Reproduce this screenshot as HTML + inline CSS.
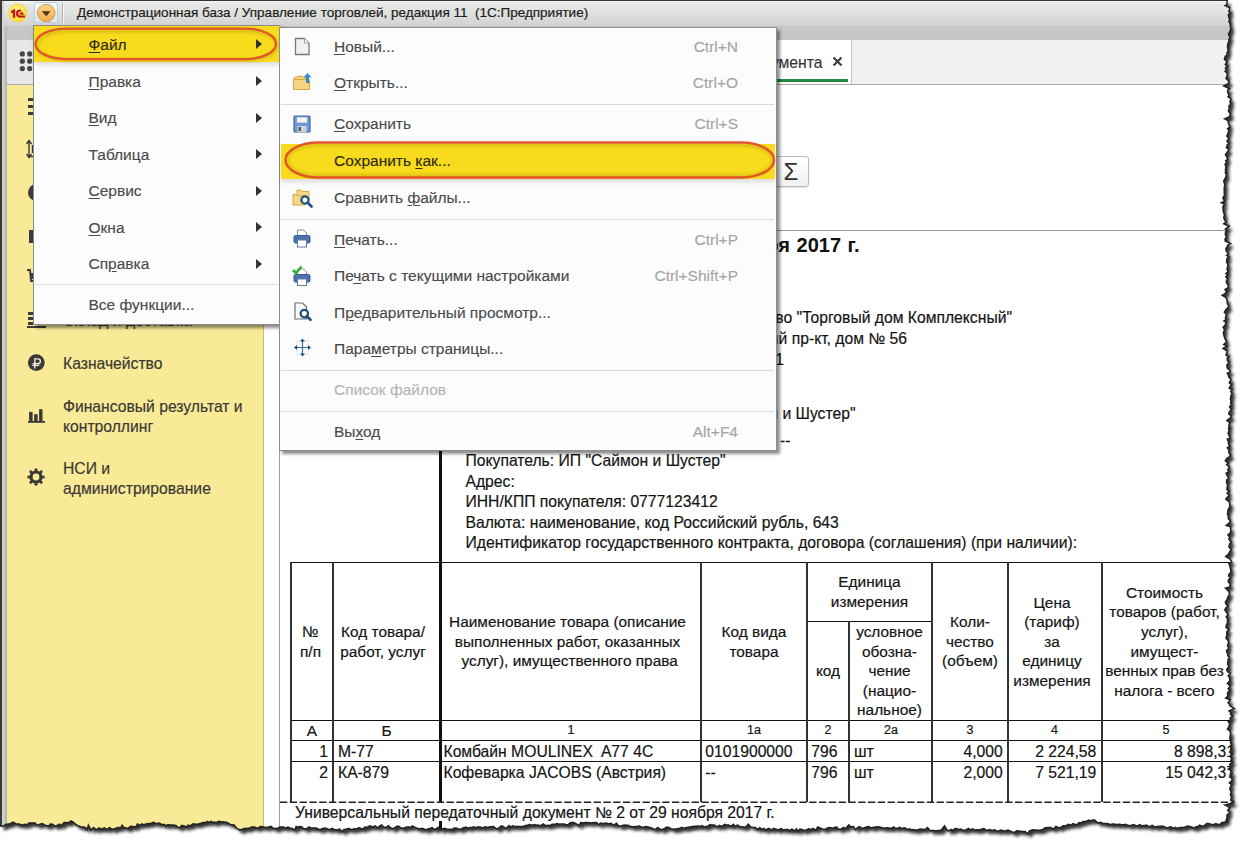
<!DOCTYPE html>
<html><head><meta charset="utf-8">
<style>
html,body{margin:0;padding:0;width:1246px;height:844px;overflow:hidden;background:#fff;}
body{font-family:"Liberation Sans",sans-serif;position:relative;}
.a{position:absolute;}
.nw{white-space:nowrap;}
#shadow{position:absolute;left:0;top:0;width:1246px;height:844px;z-index:0;}
#win{position:absolute;left:0;top:0;width:1246px;height:844px;z-index:1;overflow:hidden;background:#fff;
  clip-path:path('M0.0 0.0 L1227.4 0.0 L1226.9 2.5 L1227.0 4.4 L1225.1 5.7 L1229.9 7.8 L1229.4 9.4 L1228.9 11.8 L1230.5 13.1 L1228.3 14.5 L1228.8 17.4 L1229.7 19.8 L1228.8 21.2 L1230.2 23.7 L1230.3 26.1 L1230.7 28.9 L1229.8 31.2 L1228.6 33.9 L1228.9 35.3 L1230.2 36.8 L1228.8 39.6 L1228.9 41.4 L1227.8 43.8 L1227.4 46.8 L1227.9 48.2 L1227.9 51.4 L1226.8 53.3 L1227.3 54.9 L1225.3 56.3 L1224.4 59.3 L1227.0 61.6 L1225.3 64.5 L1227.5 66.4 L1225.4 67.9 L1226.5 69.6 L1225.1 71.3 L1227.1 73.2 L1227.2 75.8 L1226.0 78.4 L1228.9 81.1 L1228.7 83.1 L1226.7 84.4 L1223.7 86.0 L1227.1 87.5 L1229.7 88.7 L1227.8 90.2 L1227.6 92.1 L1229.0 95.3 L1228.0 96.7 L1230.5 98.4 L1231.0 99.7 L1229.9 101.2 L1230.6 104.3 L1228.9 106.1 L1229.4 108.8 L1228.3 110.7 L1230.2 113.8 L1229.7 116.7 L1224.6 118.9 L1228.0 120.7 L1228.5 123.8 L1230.0 126.9 L1227.6 128.6 L1228.8 130.2 L1228.2 133.1 L1226.8 135.9 L1228.9 138.9 L1226.9 141.1 L1228.7 142.9 L1227.3 144.9 L1226.4 147.6 L1228.6 149.1 L1228.3 150.6 L1226.5 153.1 L1225.4 154.5 L1226.8 157.0 L1227.8 159.1 L1225.7 160.7 L1226.6 162.4 L1225.0 164.4 L1225.9 166.3 L1225.5 169.4 L1225.7 171.6 L1225.3 172.8 L1226.4 174.0 L1226.0 176.2 L1225.2 178.0 L1223.7 180.8 L1224.1 182.5 L1224.8 184.7 L1224.2 187.7 L1224.3 189.9 L1224.2 192.0 L1224.5 195.1 L1222.9 198.2 L1224.7 201.3 L1221.4 202.7 L1224.3 204.1 L1222.9 207.1 L1223.1 209.6 L1223.6 212.7 L1224.6 214.7 L1223.7 217.6 L1224.5 219.8 L1226.3 221.6 L1223.7 223.7 L1229.4 226.2 L1225.3 229.0 L1226.7 230.2 L1225.6 231.7 L1225.3 234.5 L1226.5 237.6 L1225.0 238.9 L1225.2 241.0 L1230.6 243.5 L1228.0 244.8 L1227.2 246.7 L1225.9 248.4 L1226.0 250.1 L1226.4 251.4 L1228.3 253.2 L1226.6 255.4 L1228.8 256.6 L1226.9 258.9 L1226.6 262.0 L1227.8 264.1 L1227.7 266.1 L1227.0 269.2 L1227.9 271.8 L1225.9 273.7 L1228.0 275.1 L1225.9 276.6 L1227.6 279.5 L1226.3 281.2 L1226.7 282.7 L1228.3 285.9 L1228.2 287.6 L1225.0 289.5 L1226.5 291.6 L1224.8 293.8 L1222.1 295.2 L1225.3 297.0 L1226.9 299.3 L1227.2 301.9 L1227.4 303.8 L1228.9 306.4 L1226.0 309.4 L1224.3 312.2 L1226.4 314.4 L1225.5 317.3 L1225.7 319.8 L1223.9 321.1 L1226.0 322.5 L1225.2 325.0 L1223.1 327.1 L1224.6 329.8 L1223.4 332.4 L1223.6 334.1 L1224.3 336.7 L1225.6 339.9 L1226.4 342.0 L1223.7 344.5 L1227.0 346.2 L1223.0 348.5 L1227.3 351.1 L1226.9 352.8 L1225.9 355.0 L1228.8 356.6 L1227.2 357.8 L1227.5 360.9 L1229.3 362.6 L1226.9 364.9 L1227.2 368.0 L1229.9 370.2 L1230.1 371.9 L1227.3 373.2 L1228.5 375.3 L1228.7 377.1 L1230.2 378.4 L1230.9 379.8 L1229.2 382.8 L1231.7 384.8 L1230.0 386.7 L1229.1 388.0 L1232.0 389.8 L1230.6 391.5 L1231.9 393.4 L1230.8 396.3 L1230.4 399.4 L1231.0 400.7 L1230.6 403.4 L1231.4 404.7 L1229.5 406.8 L1231.4 409.5 L1229.2 412.0 L1228.7 414.0 L1231.0 415.6 L1230.9 417.2 L1228.4 419.3 L1226.9 420.7 L1229.6 422.4 L1229.0 425.1 L1228.8 427.4 L1228.5 428.7 L1229.2 430.2 L1228.1 433.1 L1228.7 434.8 L1230.0 437.9 L1227.3 439.1 L1228.6 442.1 L1228.3 443.3 L1229.7 446.2 L1227.3 447.9 L1229.0 450.1 L1228.8 452.8 L1230.7 454.9 L1229.6 456.5 L1227.0 458.3 L1225.3 460.8 L1228.3 463.1 L1226.7 464.7 L1229.3 466.8 L1227.7 469.8 L1229.2 471.5 L1226.1 473.3 L1227.3 475.9 L1228.8 478.4 L1226.9 479.7 L1226.5 482.2 L1227.6 484.9 L1227.1 488.0 L1226.9 489.7 L1229.3 491.5 L1227.0 493.1 L1229.4 495.6 L1227.1 497.6 L1225.8 499.1 L1229.5 502.1 L1229.7 505.3 L1229.8 506.8 L1229.0 508.1 L1228.0 510.0 L1227.9 511.3 L1227.5 514.4 L1228.3 516.0 L1228.4 518.8 L1230.3 520.8 L1229.6 522.7 L1226.2 525.5 L1230.5 526.8 L1230.5 529.5 L1230.8 531.3 L1230.1 533.0 L1227.9 534.8 L1230.0 537.8 L1228.8 539.0 L1231.2 542.2 L1229.6 543.9 L1228.9 546.9 L1231.0 549.6 L1229.5 552.0 L1228.7 553.9 L1225.7 556.6 L1229.8 558.9 L1231.8 561.9 L1228.9 563.3 L1229.8 565.9 L1230.3 567.9 L1230.8 570.6 L1230.7 572.1 L1229.0 574.4 L1228.5 576.0 L1230.5 577.5 L1228.8 579.4 L1228.1 581.6 L1230.2 584.1 L1229.7 586.9 L1225.4 588.2 L1228.6 591.3 L1229.4 593.3 L1229.0 595.0 L1228.3 596.4 L1227.4 598.1 L1227.0 599.7 L1225.3 602.2 L1226.4 604.7 L1228.3 606.3 L1225.9 607.7 L1224.8 610.0 L1226.6 612.5 L1228.2 614.4 L1226.2 616.7 L1228.0 619.6 L1227.2 621.2 L1227.8 622.4 L1226.3 625.3 L1226.0 627.4 L1229.0 629.9 L1226.8 631.8 L1226.9 633.6 L1226.8 635.0 L1226.0 638.1 L1228.6 641.2 L1228.5 642.5 L1227.6 645.5 L1228.2 647.1 L1228.4 649.1 L1226.5 650.6 L1227.1 652.9 L1228.2 654.6 L1227.7 655.8 L1229.4 657.1 L1228.0 659.4 L1228.0 661.5 L1227.6 664.0 L1228.2 665.2 L1228.7 666.9 L1226.9 669.0 L1226.8 670.4 L1227.8 671.8 L1230.4 673.1 L1228.2 675.8 L1229.6 677.8 L1229.9 680.7 L1227.4 683.5 L1229.9 685.7 L1229.4 687.3 L1228.1 688.6 L1229.9 690.1 L1227.5 692.9 L1227.8 696.0 L1225.7 698.2 L1230.3 699.7 L1228.0 702.7 L1229.2 704.1 L1230.3 706.1 L1234.4 708.4 L1229.0 710.9 L1231.0 712.6 L1230.4 714.5 L1232.9 716.1 L1230.1 717.8 L1230.3 720.2 L1228.3 721.4 L1229.7 723.8 L1228.8 726.8 L1227.4 729.3 L1229.7 730.7 L1230.6 733.1 L1230.3 735.5 L1229.7 738.6 L1231.0 740.0 L1230.4 742.7 L1231.2 744.0 L1231.3 745.9 L1231.7 748.9 L1229.6 752.0 L1232.5 754.0 L1231.4 755.2 L1230.3 756.7 L1231.8 758.9 L1230.8 760.4 L1232.6 761.7 L1229.7 764.4 L1231.1 767.1 L1228.2 769.2 L1230.6 770.4 L1232.2 773.0 L1231.2 774.8 L1231.0 777.5 L1232.4 780.0 L1229.3 783.0 L1231.6 784.7 L1230.2 787.3 L1229.8 789.2 L1231.2 791.7 L1230.4 794.8 L1231.6 797.4 L1230.6 800.1 L1233.8 801.7 L1231.9 803.2 L1224.9 805.1 L1229.8 807.7 L1227.6 810.3 L1229.7 812.3 L1226.9 815.2 L1227.0 818.3 L1226.2 819.7 L1227.8 822.5 L1227.0 820.1 L1224.3 822.5 L1222.2 822.2 L1220.5 824.0 L1218.6 824.8 L1215.7 823.6 L1213.7 824.7 L1211.0 824.3 L1208.1 823.5 L1206.6 823.5 L1203.9 826.1 L1201.7 826.0 L1199.5 825.2 L1197.8 826.9 L1196.1 826.5 L1194.7 828.2 L1192.1 827.2 L1190.2 826.5 L1187.2 826.1 L1186.0 826.6 L1183.0 827.6 L1180.0 827.4 L1177.7 828.5 L1175.3 827.4 L1173.7 828.4 L1171.1 826.7 L1168.3 827.5 L1166.2 828.1 L1164.6 826.6 L1161.7 826.1 L1160.0 826.4 L1158.5 826.3 L1155.3 827.1 L1152.2 825.4 L1149.1 826.9 L1147.0 825.3 L1145.6 825.2 L1144.3 825.6 L1141.7 825.7 L1139.6 824.7 L1137.6 826.0 L1135.5 825.5 L1133.5 824.5 L1130.5 825.6 L1127.6 825.2 L1125.5 824.2 L1124.1 824.4 L1121.5 824.7 L1119.4 824.2 L1117.4 824.6 L1115.9 824.4 L1113.9 823.9 L1112.6 823.9 L1109.8 824.7 L1108.4 823.7 L1105.8 823.4 L1102.9 823.2 L1099.8 822.3 L1097.9 823.1 L1094.7 819.9 L1092.7 819.9 L1090.6 821.0 L1088.9 820.0 L1085.8 821.4 L1083.0 821.6 L1081.6 822.9 L1079.1 822.6 L1077.5 824.2 L1075.0 824.4 L1072.8 823.6 L1071.4 825.2 L1068.5 824.4 L1066.8 825.2 L1065.6 826.1 L1063.9 825.5 L1061.8 826.7 L1059.9 827.8 L1058.6 827.8 L1055.8 826.5 L1053.4 829.2 L1050.8 827.4 L1049.4 827.5 L1047.5 827.6 L1044.7 828.0 L1042.3 829.8 L1039.3 830.2 L1037.7 830.2 L1035.0 829.9 L1032.7 829.8 L1031.2 830.3 L1029.7 830.7 L1027.4 833.9 L1025.3 831.5 L1022.4 831.4 L1019.3 830.9 L1016.8 830.7 L1014.3 832.7 L1011.1 831.4 L1008.1 830.1 L1005.7 830.7 L1003.7 830.9 L1001.0 830.1 L998.9 830.8 L997.2 831.3 L994.9 829.8 L991.8 830.5 L989.9 829.6 L987.6 830.2 L986.3 830.3 L984.0 828.6 L982.8 828.8 L980.4 829.8 L977.3 829.7 L974.9 829.9 L972.3 828.8 L970.2 830.1 L968.7 828.4 L965.6 829.9 L962.8 830.3 L961.1 829.1 L959.2 829.4 L956.2 828.6 L954.9 828.7 L952.5 830.7 L951.3 829.4 L948.2 830.9 L946.2 828.8 L944.6 825.9 L942.0 828.9 L940.6 830.7 L939.4 830.3 L936.7 830.7 L934.1 830.7 L932.7 830.2 L930.6 830.9 L927.5 827.5 L925.0 829.6 L922.3 829.2 L920.1 828.9 L917.8 829.6 L916.3 830.3 L913.8 829.5 L911.8 829.7 L909.1 828.8 L907.8 829.6 L904.9 827.7 L901.7 828.5 L899.9 827.3 L898.0 827.9 L895.0 828.2 L893.8 826.9 L891.4 828.3 L890.1 828.3 L887.2 827.7 L884.3 828.2 L881.3 827.5 L878.5 826.8 L875.4 826.9 L872.8 827.4 L871.1 828.1 L869.0 826.5 L866.3 826.9 L863.3 828.4 L861.1 827.7 L859.5 826.7 L857.6 827.7 L855.4 829.6 L853.4 826.6 L850.7 826.7 L848.8 824.8 L845.6 828.6 L843.3 827.3 L841.2 829.0 L838.4 829.2 L837.1 827.4 L835.7 827.1 L832.8 828.3 L829.8 827.5 L827.8 827.7 L826.0 828.9 L822.9 829.3 L820.8 828.1 L817.7 827.0 L815.8 830.2 L812.9 828.3 L810.3 829.8 L808.9 828.7 L805.9 830.1 L803.5 830.4 L801.6 829.3 L799.5 829.2 L798.0 831.7 L796.4 828.8 L794.8 830.9 L791.8 828.9 L790.4 830.7 L787.9 829.5 L785.1 829.5 L783.6 830.1 L781.3 828.6 L779.6 829.2 L777.8 830.1 L776.3 829.3 L773.3 828.3 L772.0 830.1 L770.3 829.1 L768.6 828.3 L765.4 830.2 L764.0 828.4 L762.7 829.4 L759.6 827.6 L757.7 829.6 L755.4 827.5 L752.4 827.2 L750.9 826.9 L748.3 824.1 L745.9 827.0 L744.3 827.1 L741.5 826.7 L740.1 826.8 L737.5 824.9 L735.6 826.5 L733.4 824.3 L731.3 826.1 L729.7 825.8 L728.2 824.8 L727.0 825.2 L724.7 824.4 L721.9 826.4 L719.3 825.4 L718.0 826.6 L715.8 825.9 L713.5 824.8 L711.8 825.3 L710.1 824.5 L707.6 826.2 L705.2 826.5 L703.8 827.5 L702.5 825.7 L700.3 826.3 L698.3 826.0 L695.4 826.2 L692.7 826.4 L689.6 827.1 L686.7 827.5 L683.6 828.3 L682.0 827.3 L678.8 828.6 L676.0 828.9 L672.8 829.2 L670.8 828.6 L668.5 827.3 L666.3 827.3 L663.2 829.3 L660.7 829.5 L657.8 827.5 L656.0 828.9 L653.7 829.2 L652.0 828.1 L648.9 827.3 L646.4 826.6 L643.3 827.3 L641.2 827.1 L639.7 826.0 L637.7 826.2 L636.4 826.7 L633.9 826.5 L632.3 826.7 L630.0 826.3 L628.2 825.2 L626.0 825.2 L624.8 825.0 L623.1 825.3 L621.3 826.1 L618.6 826.0 L616.5 823.3 L614.4 824.7 L612.8 825.0 L611.3 823.4 L608.7 823.7 L605.9 823.1 L603.2 823.4 L600.4 823.0 L599.0 824.9 L596.6 822.5 L594.2 822.4 L591.3 822.9 L589.2 822.7 L587.4 822.5 L585.4 822.4 L582.5 823.0 L581.0 822.5 L578.6 825.8 L576.8 824.0 L573.7 822.5 L570.6 822.6 L568.4 824.4 L566.2 824.7 L563.9 824.0 L562.0 823.9 L558.9 824.2 L557.5 823.6 L555.2 824.2 L552.1 824.2 L549.6 825.6 L547.4 825.3 L545.5 825.8 L543.3 823.9 L540.7 825.7 L537.7 825.0 L536.0 825.3 L534.4 824.6 L532.0 825.2 L529.5 824.6 L526.7 825.4 L525.5 825.5 L523.1 826.5 L521.0 826.4 L518.5 826.4 L516.1 826.2 L514.6 827.1 L513.2 825.7 L510.4 826.9 L509.0 825.5 L507.2 827.2 L505.6 828.6 L503.3 826.4 L501.3 825.8 L498.9 828.0 L496.5 829.0 L493.6 826.6 L490.8 826.7 L487.6 827.3 L486.0 827.1 L484.3 826.9 L482.1 828.1 L480.6 827.1 L477.5 827.1 L476.0 827.8 L474.0 826.8 L471.2 827.6 L469.6 827.5 L468.3 828.5 L466.8 827.3 L463.9 827.5 L461.1 829.2 L459.2 829.1 L456.0 828.1 L453.8 828.2 L452.4 829.4 L449.4 829.3 L447.7 829.5 L444.7 828.4 L442.4 828.9 L440.5 830.0 L438.6 827.3 L435.7 828.9 L434.3 829.5 L432.1 827.6 L430.5 828.2 L428.7 828.8 L426.0 829.8 L424.5 829.3 L422.0 828.3 L419.5 829.0 L416.6 828.0 L415.0 827.4 L412.3 825.9 L410.8 827.3 L408.8 826.9 L406.4 827.1 L404.0 828.2 L402.0 828.0 L400.8 828.3 L399.0 826.3 L396.6 826.2 L395.1 827.8 L392.1 828.7 L390.1 827.4 L388.4 825.6 L386.3 827.5 L383.6 827.1 L381.5 825.0 L379.5 826.1 L378.0 828.0 L375.2 825.9 L372.1 827.1 L370.4 825.9 L368.3 826.4 L366.9 827.8 L365.2 826.9 L363.1 828.7 L361.3 828.8 L359.0 827.7 L356.7 829.0 L354.2 828.8 L351.4 829.7 L349.6 828.7 L348.3 828.6 L345.7 829.3 L343.9 829.5 L342.3 831.7 L339.6 829.0 L336.5 829.9 L334.3 829.5 L332.0 828.3 L329.5 829.7 L327.0 828.6 L325.5 828.0 L322.7 828.4 L320.2 829.6 L318.6 829.3 L316.0 828.1 L313.1 827.9 L310.8 827.9 L309.1 827.0 L306.7 828.7 L303.7 828.8 L301.5 826.8 L299.1 826.5 L297.6 827.4 L296.2 826.4 L294.6 830.1 L291.7 828.2 L289.9 827.9 L287.9 827.1 L285.4 828.3 L283.8 827.0 L281.5 827.1 L280.1 827.1 L277.0 828.5 L273.8 828.6 L271.0 826.4 L268.6 827.0 L265.5 827.5 L263.7 827.1 L262.4 826.8 L260.3 826.5 L258.4 827.8 L256.1 827.9 L254.7 827.1 L252.4 827.1 L250.7 827.2 L249.0 828.3 L247.4 828.6 L245.1 828.3 L243.8 828.6 L241.5 829.4 L240.1 830.2 L238.6 829.1 L237.1 828.6 L234.4 825.1 L233.0 824.7 L231.8 824.9 L230.0 824.2 L227.0 822.4 L224.7 822.0 L223.2 821.7 L220.4 821.8 L219.0 821.1 L215.9 822.8 L214.5 821.9 L213.1 822.9 L211.4 821.3 L208.5 822.4 L207.3 821.4 L205.7 822.6 L203.1 822.6 L200.2 823.6 L197.3 824.2 L195.8 824.3 L193.0 823.8 L190.2 825.9 L188.0 825.1 L186.1 827.2 L184.7 826.1 L181.7 825.4 L179.8 827.4 L177.8 827.2 L176.0 825.5 L172.8 825.0 L170.2 825.0 L168.0 824.5 L165.8 825.8 L164.5 824.5 L161.6 824.5 L159.1 823.0 L156.3 823.7 L153.7 822.3 L151.1 823.3 L149.2 823.8 L147.8 823.5 L144.7 824.5 L143.0 824.3 L141.5 824.0 L139.4 825.5 L137.6 824.0 L135.8 826.9 L132.7 826.6 L130.3 826.4 L128.0 828.8 L125.2 827.5 L123.9 827.7 L122.1 825.2 L120.4 828.4 L118.4 827.3 L115.5 828.5 L112.8 829.3 L111.5 829.0 L109.6 827.5 L107.3 829.4 L104.3 827.9 L101.6 829.1 L99.0 827.9 L97.7 829.2 L95.5 829.2 L93.4 827.5 L91.1 830.1 L88.4 825.2 L86.9 829.9 L84.9 827.1 L82.6 826.9 L80.7 826.7 L78.1 825.8 L76.3 825.0 L74.2 822.8 L71.1 821.0 L68.6 822.7 L65.4 822.5 L64.0 822.5 L62.7 824.1 L61.1 825.7 L59.6 824.2 L56.6 825.7 L54.9 825.9 L52.4 824.2 L50.3 824.1 L48.9 825.9 L46.9 825.6 L44.9 825.2 L42.4 823.5 L40.7 823.9 L39.1 824.6 L37.3 825.1 L34.9 822.9 L32.0 823.0 L29.2 823.0 L27.0 824.7 L24.4 824.2 L22.1 825.1 L19.1 824.1 L16.2 823.9 L13.0 822.1 L9.8 824.0 L8.3 823.9 L5.8 824.5 L2.7 826.3 L0.0 826.0 L0.0 0.0 Z');}
#edge{position:absolute;left:0;top:0;width:1246px;height:844px;z-index:50;pointer-events:none;}
/* title */
#title{left:0;top:0;width:1246px;height:40px;background:linear-gradient(#333 0,#333 1px,#f4f5f4 1px,#e6e8e6 4px,#e0e2e0 12px,#d2d3d2 25px,#c7c8c7 26px,#c5c6c5 40px);}
#ttext{left:77px;top:5px;font-size:13.5px;color:#1c1c1c;letter-spacing:0px;-webkit-text-stroke:0.2px #1c1c1c;}
/* left frame */
#lf1{left:0;top:0;width:2px;height:844px;background:#3a3a36;}
#lf2{left:2px;top:1px;width:2px;height:843px;background:#d3d3d3;}
#lf3{left:4px;top:26px;width:3px;height:818px;background:linear-gradient(90deg,#c2c2c0 0,#c0c0bc 60%,#abae9f 100%);}
#fpanel{left:7px;top:40px;width:257px;height:44px;background:#e7e7e7;border-bottom:1px solid #a8a8a8;}
#sidebar{left:7px;top:85px;width:256px;height:760px;background:#f9ea98;border-right:1px solid #cdbd63;}
#gap{left:264px;top:40px;width:15px;height:804px;background:#fff;}
#vline{left:279px;top:40px;width:1px;height:804px;background:#a0a0a0;}
#tabbar{left:264px;top:40px;width:982px;height:44px;background:#f0f1f0;border-bottom:1px solid #a9a9a9;}
#tab{left:280px;top:40px;width:571px;height:44px;background:#fff;border-right:1px solid #c4c4c4;}
#tabul{left:600px;top:79px;width:248px;height:3px;background:#218a3c;}
.side{left:63px;font-size:15.7px;color:#3a3934;line-height:20px;-webkit-text-stroke:0.18px #3a3934;margin-top:0.7px;}
/* content */
#hline{left:280px;top:230px;width:966px;height:1px;background:#9a9a9a;}
.doc{font-size:15.7px;color:#151515;white-space:nowrap;-webkit-text-stroke:0.2px #151515;}
.tb{position:absolute;background:#111;}
.th{position:absolute;font-size:15.4px;color:#151515;-webkit-text-stroke:0.2px #151515;text-align:center;line-height:19.6px;}
.sm{font-size:12.5px;}
/* menus */
.menu{position:absolute;background:#fcfcfc;border:1px solid #8c8c8c;box-shadow:3px 3px 3px rgba(0,0,0,0.45);}
.mi{position:absolute;font-size:15.5px;color:#4a4a4d;-webkit-text-stroke:0.15px currentColor;white-space:nowrap;line-height:18px;}
.sc{position:absolute;font-size:15.5px;color:#a5a5a5;-webkit-text-stroke:0.15px currentColor;white-space:nowrap;line-height:18px;text-align:right;}
.sep{position:absolute;height:1px;background:#dedbd2;}
u{text-decoration:underline;text-decoration-thickness:1.3px;text-underline-offset:2px;}
.arr{position:absolute;width:0;height:0;border-top:5px solid transparent;border-bottom:5px solid transparent;border-left:6.5px solid #333;}
</style></head><body>
<svg id="shadow" width="1246" height="844">
  <defs><filter id="bl" x="-5%" y="-5%" width="110%" height="110%"><feGaussianBlur stdDeviation="1.8"/></filter></defs>
  <path d="M3.5 4.0 L1230.9 4.0 L1230.4 6.5 L1230.5 8.4 L1228.6 9.7 L1233.4 11.8 L1232.9 13.4 L1232.4 15.8 L1234.0 17.1 L1231.8 18.5 L1232.3 21.4 L1233.2 23.8 L1232.3 25.2 L1233.7 27.7 L1233.8 30.1 L1234.2 32.9 L1233.3 35.2 L1232.1 37.9 L1232.4 39.3 L1233.7 40.8 L1232.3 43.6 L1232.4 45.4 L1231.3 47.8 L1230.9 50.8 L1231.4 52.2 L1231.4 55.4 L1230.3 57.3 L1230.8 58.9 L1228.8 60.3 L1227.9 63.3 L1230.5 65.6 L1228.8 68.5 L1231.0 70.4 L1228.9 71.9 L1230.0 73.6 L1228.6 75.3 L1230.6 77.2 L1230.7 79.8 L1229.5 82.4 L1232.4 85.1 L1232.2 87.1 L1230.2 88.4 L1227.2 90.0 L1230.6 91.5 L1233.2 92.7 L1231.3 94.2 L1231.1 96.1 L1232.5 99.3 L1231.5 100.7 L1234.0 102.4 L1234.5 103.7 L1233.4 105.2 L1234.1 108.3 L1232.4 110.1 L1232.9 112.8 L1231.8 114.7 L1233.7 117.8 L1233.2 120.7 L1228.1 122.9 L1231.5 124.7 L1232.0 127.8 L1233.5 130.9 L1231.1 132.6 L1232.3 134.2 L1231.7 137.1 L1230.3 139.9 L1232.4 142.9 L1230.4 145.1 L1232.2 146.9 L1230.8 148.9 L1229.9 151.6 L1232.1 153.1 L1231.8 154.6 L1230.0 157.1 L1228.9 158.5 L1230.3 161.0 L1231.3 163.1 L1229.2 164.7 L1230.1 166.4 L1228.5 168.4 L1229.4 170.3 L1229.0 173.4 L1229.2 175.6 L1228.8 176.8 L1229.9 178.0 L1229.5 180.2 L1228.7 182.0 L1227.2 184.8 L1227.6 186.5 L1228.3 188.7 L1227.7 191.7 L1227.8 193.9 L1227.7 196.0 L1228.0 199.1 L1226.4 202.2 L1228.2 205.3 L1224.9 206.7 L1227.8 208.1 L1226.4 211.1 L1226.6 213.6 L1227.1 216.7 L1228.1 218.7 L1227.2 221.6 L1228.0 223.8 L1229.8 225.6 L1227.2 227.7 L1232.9 230.2 L1228.8 233.0 L1230.2 234.2 L1229.1 235.7 L1228.8 238.5 L1230.0 241.6 L1228.5 242.9 L1228.7 245.0 L1234.1 247.5 L1231.5 248.8 L1230.7 250.7 L1229.4 252.4 L1229.5 254.1 L1229.9 255.4 L1231.8 257.2 L1230.1 259.4 L1232.3 260.6 L1230.4 262.9 L1230.1 266.0 L1231.3 268.1 L1231.2 270.1 L1230.5 273.2 L1231.4 275.8 L1229.4 277.7 L1231.5 279.1 L1229.4 280.6 L1231.1 283.5 L1229.8 285.2 L1230.2 286.7 L1231.8 289.9 L1231.7 291.6 L1228.5 293.5 L1230.0 295.6 L1228.3 297.8 L1225.6 299.2 L1228.8 301.0 L1230.4 303.3 L1230.7 305.9 L1230.9 307.8 L1232.4 310.4 L1229.5 313.4 L1227.8 316.2 L1229.9 318.4 L1229.0 321.3 L1229.2 323.8 L1227.4 325.1 L1229.5 326.5 L1228.7 329.0 L1226.6 331.1 L1228.1 333.8 L1226.9 336.4 L1227.1 338.1 L1227.8 340.7 L1229.1 343.9 L1229.9 346.0 L1227.2 348.5 L1230.5 350.2 L1226.5 352.5 L1230.8 355.1 L1230.4 356.8 L1229.4 359.0 L1232.3 360.6 L1230.7 361.8 L1231.0 364.9 L1232.8 366.6 L1230.4 368.9 L1230.7 372.0 L1233.4 374.2 L1233.6 375.9 L1230.8 377.2 L1232.0 379.3 L1232.2 381.1 L1233.7 382.4 L1234.4 383.8 L1232.7 386.8 L1235.2 388.8 L1233.5 390.7 L1232.6 392.0 L1235.5 393.8 L1234.1 395.5 L1235.4 397.4 L1234.3 400.3 L1233.9 403.4 L1234.5 404.7 L1234.1 407.4 L1234.9 408.7 L1233.0 410.8 L1234.9 413.5 L1232.7 416.0 L1232.2 418.0 L1234.5 419.6 L1234.4 421.2 L1231.9 423.3 L1230.4 424.7 L1233.1 426.4 L1232.5 429.1 L1232.3 431.4 L1232.0 432.7 L1232.7 434.2 L1231.6 437.1 L1232.2 438.8 L1233.5 441.9 L1230.8 443.1 L1232.1 446.1 L1231.8 447.3 L1233.2 450.2 L1230.8 451.9 L1232.5 454.1 L1232.3 456.8 L1234.2 458.9 L1233.1 460.5 L1230.5 462.3 L1228.8 464.8 L1231.8 467.1 L1230.2 468.7 L1232.8 470.8 L1231.2 473.8 L1232.7 475.5 L1229.6 477.3 L1230.8 479.9 L1232.3 482.4 L1230.4 483.7 L1230.0 486.2 L1231.1 488.9 L1230.6 492.0 L1230.4 493.7 L1232.8 495.5 L1230.5 497.1 L1232.9 499.6 L1230.6 501.6 L1229.3 503.1 L1233.0 506.1 L1233.2 509.3 L1233.3 510.8 L1232.5 512.1 L1231.5 514.0 L1231.4 515.3 L1231.0 518.4 L1231.8 520.0 L1231.9 522.8 L1233.8 524.8 L1233.1 526.7 L1229.7 529.5 L1234.0 530.8 L1234.0 533.5 L1234.3 535.3 L1233.6 537.0 L1231.4 538.8 L1233.5 541.8 L1232.3 543.0 L1234.7 546.2 L1233.1 547.9 L1232.4 550.9 L1234.5 553.6 L1233.0 556.0 L1232.2 557.9 L1229.2 560.6 L1233.3 562.9 L1235.3 565.9 L1232.4 567.3 L1233.3 569.9 L1233.8 571.9 L1234.3 574.6 L1234.2 576.1 L1232.5 578.4 L1232.0 580.0 L1234.0 581.5 L1232.3 583.4 L1231.6 585.6 L1233.7 588.1 L1233.2 590.9 L1228.9 592.2 L1232.1 595.3 L1232.9 597.3 L1232.5 599.0 L1231.8 600.4 L1230.9 602.1 L1230.5 603.7 L1228.8 606.2 L1229.9 608.7 L1231.8 610.3 L1229.4 611.7 L1228.3 614.0 L1230.1 616.5 L1231.7 618.4 L1229.7 620.7 L1231.5 623.6 L1230.7 625.2 L1231.3 626.4 L1229.8 629.3 L1229.5 631.4 L1232.5 633.9 L1230.3 635.8 L1230.4 637.6 L1230.3 639.0 L1229.5 642.1 L1232.1 645.2 L1232.0 646.5 L1231.1 649.5 L1231.7 651.1 L1231.9 653.1 L1230.0 654.6 L1230.6 656.9 L1231.7 658.6 L1231.2 659.8 L1232.9 661.1 L1231.5 663.4 L1231.5 665.5 L1231.1 668.0 L1231.7 669.2 L1232.2 670.9 L1230.4 673.0 L1230.3 674.4 L1231.3 675.8 L1233.9 677.1 L1231.7 679.8 L1233.1 681.8 L1233.4 684.7 L1230.9 687.5 L1233.4 689.7 L1232.9 691.3 L1231.6 692.6 L1233.4 694.1 L1231.0 696.9 L1231.3 700.0 L1229.2 702.2 L1233.8 703.7 L1231.5 706.7 L1232.7 708.1 L1233.8 710.1 L1237.9 712.4 L1232.5 714.9 L1234.5 716.6 L1233.9 718.5 L1236.4 720.1 L1233.6 721.8 L1233.8 724.2 L1231.8 725.4 L1233.2 727.8 L1232.3 730.8 L1230.9 733.3 L1233.2 734.7 L1234.1 737.1 L1233.8 739.5 L1233.2 742.6 L1234.5 744.0 L1233.9 746.7 L1234.7 748.0 L1234.8 749.9 L1235.2 752.9 L1233.1 756.0 L1236.0 758.0 L1234.9 759.2 L1233.8 760.7 L1235.3 762.9 L1234.3 764.4 L1236.1 765.7 L1233.2 768.4 L1234.6 771.1 L1231.7 773.2 L1234.1 774.4 L1235.7 777.0 L1234.7 778.8 L1234.5 781.5 L1235.9 784.0 L1232.8 787.0 L1235.1 788.7 L1233.7 791.3 L1233.3 793.2 L1234.7 795.7 L1233.9 798.8 L1235.1 801.4 L1234.1 804.1 L1237.3 805.7 L1235.4 807.2 L1228.4 809.1 L1233.3 811.7 L1231.1 814.3 L1233.2 816.3 L1230.4 819.2 L1230.5 822.3 L1229.7 823.7 L1231.3 826.5 L1230.5 824.1 L1227.8 826.5 L1225.7 826.2 L1224.0 828.0 L1222.1 828.8 L1219.2 827.6 L1217.2 828.7 L1214.5 828.3 L1211.6 827.5 L1210.1 827.5 L1207.4 830.1 L1205.2 830.0 L1203.0 829.2 L1201.3 830.9 L1199.6 830.5 L1198.2 832.2 L1195.6 831.2 L1193.7 830.5 L1190.7 830.1 L1189.5 830.6 L1186.5 831.6 L1183.5 831.4 L1181.2 832.5 L1178.8 831.4 L1177.2 832.4 L1174.6 830.7 L1171.8 831.5 L1169.7 832.1 L1168.1 830.6 L1165.2 830.1 L1163.5 830.4 L1162.0 830.3 L1158.8 831.1 L1155.7 829.4 L1152.6 830.9 L1150.5 829.3 L1149.1 829.2 L1147.8 829.6 L1145.2 829.7 L1143.1 828.7 L1141.1 830.0 L1139.0 829.5 L1137.0 828.5 L1134.0 829.6 L1131.1 829.2 L1129.0 828.2 L1127.6 828.4 L1125.0 828.7 L1122.9 828.2 L1120.9 828.6 L1119.4 828.4 L1117.4 827.9 L1116.1 827.9 L1113.3 828.7 L1111.9 827.7 L1109.3 827.4 L1106.4 827.2 L1103.3 826.3 L1101.4 827.1 L1098.2 823.9 L1096.2 823.9 L1094.1 825.0 L1092.4 824.0 L1089.3 825.4 L1086.5 825.6 L1085.1 826.9 L1082.6 826.6 L1081.0 828.2 L1078.5 828.4 L1076.3 827.6 L1074.9 829.2 L1072.0 828.4 L1070.3 829.2 L1069.1 830.1 L1067.4 829.5 L1065.3 830.7 L1063.4 831.8 L1062.1 831.8 L1059.3 830.5 L1056.9 833.2 L1054.3 831.4 L1052.9 831.5 L1051.0 831.6 L1048.2 832.0 L1045.8 833.8 L1042.8 834.2 L1041.2 834.2 L1038.5 833.9 L1036.2 833.8 L1034.7 834.3 L1033.2 834.7 L1030.9 837.9 L1028.8 835.5 L1025.9 835.4 L1022.8 834.9 L1020.3 834.7 L1017.8 836.7 L1014.6 835.4 L1011.6 834.1 L1009.2 834.7 L1007.2 834.9 L1004.5 834.1 L1002.4 834.8 L1000.7 835.3 L998.4 833.8 L995.3 834.5 L993.4 833.6 L991.1 834.2 L989.8 834.3 L987.5 832.6 L986.3 832.8 L983.9 833.8 L980.8 833.7 L978.4 833.9 L975.8 832.8 L973.7 834.1 L972.2 832.4 L969.1 833.9 L966.3 834.3 L964.6 833.1 L962.7 833.4 L959.7 832.6 L958.4 832.7 L956.0 834.7 L954.8 833.4 L951.7 834.9 L949.7 832.8 L948.1 829.9 L945.5 832.9 L944.1 834.7 L942.9 834.3 L940.2 834.7 L937.6 834.7 L936.2 834.2 L934.1 834.9 L931.0 831.5 L928.5 833.6 L925.8 833.2 L923.6 832.9 L921.3 833.6 L919.8 834.3 L917.3 833.5 L915.3 833.7 L912.6 832.8 L911.3 833.6 L908.4 831.7 L905.2 832.5 L903.4 831.3 L901.5 831.9 L898.5 832.2 L897.3 830.9 L894.9 832.3 L893.6 832.3 L890.7 831.7 L887.8 832.2 L884.8 831.5 L882.0 830.8 L878.9 830.9 L876.3 831.4 L874.6 832.1 L872.5 830.5 L869.8 830.9 L866.8 832.4 L864.6 831.7 L863.0 830.7 L861.1 831.7 L858.9 833.6 L856.9 830.6 L854.2 830.7 L852.3 828.8 L849.1 832.6 L846.8 831.3 L844.7 833.0 L841.9 833.2 L840.6 831.4 L839.2 831.1 L836.3 832.3 L833.3 831.5 L831.3 831.7 L829.5 832.9 L826.4 833.3 L824.3 832.1 L821.2 831.0 L819.3 834.2 L816.4 832.3 L813.8 833.8 L812.4 832.7 L809.4 834.1 L807.0 834.4 L805.1 833.3 L803.0 833.2 L801.5 835.7 L799.9 832.8 L798.3 834.9 L795.3 832.9 L793.9 834.7 L791.4 833.5 L788.6 833.5 L787.1 834.1 L784.8 832.6 L783.1 833.2 L781.3 834.1 L779.8 833.3 L776.8 832.3 L775.5 834.1 L773.8 833.1 L772.1 832.3 L768.9 834.2 L767.5 832.4 L766.2 833.4 L763.1 831.6 L761.2 833.6 L758.9 831.5 L755.9 831.2 L754.4 830.9 L751.8 828.1 L749.4 831.0 L747.8 831.1 L745.0 830.7 L743.6 830.8 L741.0 828.9 L739.1 830.5 L736.9 828.3 L734.8 830.1 L733.2 829.8 L731.7 828.8 L730.5 829.2 L728.2 828.4 L725.4 830.4 L722.8 829.4 L721.5 830.6 L719.3 829.9 L717.0 828.8 L715.3 829.3 L713.6 828.5 L711.1 830.2 L708.7 830.5 L707.3 831.5 L706.0 829.7 L703.8 830.3 L701.8 830.0 L698.9 830.2 L696.2 830.4 L693.1 831.1 L690.2 831.5 L687.1 832.3 L685.5 831.3 L682.3 832.6 L679.5 832.9 L676.3 833.2 L674.3 832.6 L672.0 831.3 L669.8 831.3 L666.7 833.3 L664.2 833.5 L661.3 831.5 L659.5 832.9 L657.2 833.2 L655.5 832.1 L652.4 831.3 L649.9 830.6 L646.8 831.3 L644.7 831.1 L643.2 830.0 L641.2 830.2 L639.9 830.7 L637.4 830.5 L635.8 830.7 L633.5 830.3 L631.7 829.2 L629.5 829.2 L628.3 829.0 L626.6 829.3 L624.8 830.1 L622.1 830.0 L620.0 827.3 L617.9 828.7 L616.3 829.0 L614.8 827.4 L612.2 827.7 L609.4 827.1 L606.7 827.4 L603.9 827.0 L602.5 828.9 L600.1 826.5 L597.7 826.4 L594.8 826.9 L592.7 826.7 L590.9 826.5 L588.9 826.4 L586.0 827.0 L584.5 826.5 L582.1 829.8 L580.3 828.0 L577.2 826.5 L574.1 826.6 L571.9 828.4 L569.7 828.7 L567.4 828.0 L565.5 827.9 L562.4 828.2 L561.0 827.6 L558.7 828.2 L555.6 828.2 L553.1 829.6 L550.9 829.3 L549.0 829.8 L546.8 827.9 L544.2 829.7 L541.2 829.0 L539.5 829.3 L537.9 828.6 L535.5 829.2 L533.0 828.6 L530.2 829.4 L529.0 829.5 L526.6 830.5 L524.5 830.4 L522.0 830.4 L519.6 830.2 L518.1 831.1 L516.7 829.7 L513.9 830.9 L512.5 829.5 L510.7 831.2 L509.1 832.6 L506.8 830.4 L504.8 829.8 L502.4 832.0 L500.0 833.0 L497.1 830.6 L494.3 830.7 L491.1 831.3 L489.5 831.1 L487.8 830.9 L485.6 832.1 L484.1 831.1 L481.0 831.1 L479.5 831.8 L477.5 830.8 L474.7 831.6 L473.1 831.5 L471.8 832.5 L470.3 831.3 L467.4 831.5 L464.6 833.2 L462.7 833.1 L459.5 832.1 L457.3 832.2 L455.9 833.4 L452.9 833.3 L451.2 833.5 L448.2 832.4 L445.9 832.9 L444.0 834.0 L442.1 831.3 L439.2 832.9 L437.8 833.5 L435.6 831.6 L434.0 832.2 L432.2 832.8 L429.5 833.8 L428.0 833.3 L425.5 832.3 L423.0 833.0 L420.1 832.0 L418.5 831.4 L415.8 829.9 L414.3 831.3 L412.3 830.9 L409.9 831.1 L407.5 832.2 L405.5 832.0 L404.3 832.3 L402.5 830.3 L400.1 830.2 L398.6 831.8 L395.6 832.7 L393.6 831.4 L391.9 829.6 L389.8 831.5 L387.1 831.1 L385.0 829.0 L383.0 830.1 L381.5 832.0 L378.7 829.9 L375.6 831.1 L373.9 829.9 L371.8 830.4 L370.4 831.8 L368.7 830.9 L366.6 832.7 L364.8 832.8 L362.5 831.7 L360.2 833.0 L357.7 832.8 L354.9 833.7 L353.1 832.7 L351.8 832.6 L349.2 833.3 L347.4 833.5 L345.8 835.7 L343.1 833.0 L340.0 833.9 L337.8 833.5 L335.5 832.3 L333.0 833.7 L330.5 832.6 L329.0 832.0 L326.2 832.4 L323.7 833.6 L322.1 833.3 L319.5 832.1 L316.6 831.9 L314.3 831.9 L312.6 831.0 L310.2 832.7 L307.2 832.8 L305.0 830.8 L302.6 830.5 L301.1 831.4 L299.7 830.4 L298.1 834.1 L295.2 832.2 L293.4 831.9 L291.4 831.1 L288.9 832.3 L287.3 831.0 L285.0 831.1 L283.6 831.1 L280.5 832.5 L277.3 832.6 L274.5 830.4 L272.1 831.0 L269.0 831.5 L267.2 831.1 L265.9 830.8 L263.8 830.5 L261.9 831.8 L259.6 831.9 L258.2 831.1 L255.9 831.1 L254.2 831.2 L252.5 832.3 L250.9 832.6 L248.6 832.3 L247.3 832.6 L245.0 833.4 L243.6 834.2 L242.1 833.1 L240.6 832.6 L237.9 829.1 L236.5 828.7 L235.3 828.9 L233.5 828.2 L230.5 826.4 L228.2 826.0 L226.7 825.7 L223.9 825.8 L222.5 825.1 L219.4 826.8 L218.0 825.9 L216.6 826.9 L214.9 825.3 L212.0 826.4 L210.8 825.4 L209.2 826.6 L206.6 826.6 L203.7 827.6 L200.8 828.2 L199.3 828.3 L196.5 827.8 L193.7 829.9 L191.5 829.1 L189.6 831.2 L188.2 830.1 L185.2 829.4 L183.3 831.4 L181.3 831.2 L179.5 829.5 L176.3 829.0 L173.7 829.0 L171.5 828.5 L169.3 829.8 L168.0 828.5 L165.1 828.5 L162.6 827.0 L159.8 827.7 L157.2 826.3 L154.6 827.3 L152.7 827.8 L151.3 827.5 L148.2 828.5 L146.5 828.3 L145.0 828.0 L142.9 829.5 L141.1 828.0 L139.3 830.9 L136.2 830.6 L133.8 830.4 L131.5 832.8 L128.7 831.5 L127.4 831.7 L125.6 829.2 L123.9 832.4 L121.9 831.3 L119.0 832.5 L116.3 833.3 L115.0 833.0 L113.1 831.5 L110.8 833.4 L107.8 831.9 L105.1 833.1 L102.5 831.9 L101.2 833.2 L99.0 833.2 L96.9 831.5 L94.6 834.1 L91.9 829.2 L90.4 833.9 L88.4 831.1 L86.1 830.9 L84.2 830.7 L81.6 829.8 L79.8 829.0 L77.7 826.8 L74.6 825.0 L72.1 826.7 L68.9 826.5 L67.5 826.5 L66.2 828.1 L64.6 829.7 L63.1 828.2 L60.1 829.7 L58.4 829.9 L55.9 828.2 L53.8 828.1 L52.4 829.9 L50.4 829.6 L48.4 829.2 L45.9 827.5 L44.2 827.9 L42.6 828.6 L40.8 829.1 L38.4 826.9 L35.5 827.0 L32.7 827.0 L30.5 828.7 L27.9 828.2 L25.6 829.1 L22.6 828.1 L19.7 827.9 L16.5 826.1 L13.3 828.0 L11.8 827.9 L9.3 828.5 L6.2 830.3 L3.5 830.0 L3.5 4.0 Z" fill="#2a2a2a" filter="url(#bl)" opacity="0.95"/>
</svg>
<div id="win">
<div id="title" class="a"></div>
<div id="lf1" class="a"></div><div id="lf2" class="a"></div><div id="lf3" class="a"></div>
<!-- 1C logo -->
<svg class="a" style="left:7px;top:2px" width="22" height="22" viewBox="0 0 22 22">
  <defs><radialGradient id="lg" cx="0.45" cy="0.4" r="0.7"><stop offset="0" stop-color="#fff6a8"/><stop offset="0.55" stop-color="#fde64e"/><stop offset="1" stop-color="#f2cf1e"/></radialGradient></defs>
  <circle cx="10.8" cy="11" r="9.2" fill="url(#lg)" stroke="#e6d47a" stroke-width="0.8"/>
  <path d="M3.8 9.4 L6.6 7.2 L8.2 7.2 L8.2 15.8 L5.9 15.8 L5.9 10.6 L4.6 11.4 Z" fill="#c4151a"/>
  <path d="M14.6 8.4 C12.8 6.6 8.9 7.3 8.9 11.4 C8.9 15 12 15.8 13.8 15.6 L18 15.6 L18 13.4 L13.6 13.4 C12.4 13.5 11.3 12.9 11.3 11.4 C11.3 9.6 12.9 9.2 13.7 10.1 Z" fill="#c4151a"/>
  <path d="M12.2 11.4 L15.4 10 L17.2 12.6 L12.8 12.8 Z" fill="#c4151a"/>
</svg>
<!-- dropdown button -->
<div class="a" style="left:34px;top:2px;width:24px;height:21px;background:linear-gradient(#f4f9fd,#dbe9f6);border:1px solid #b9cde2;border-radius:2px;box-sizing:border-box;"></div>
<svg class="a" style="left:35px;top:2px" width="22" height="22" viewBox="0 0 22 22">
  <defs><linearGradient id="dg" x1="0" y1="0" x2="0" y2="1"><stop offset="0" stop-color="#fbd68a"/><stop offset="1" stop-color="#f3a94a"/></linearGradient></defs>
  <circle cx="11.2" cy="11" r="8.8" fill="url(#dg)" stroke="#c99a4a" stroke-width="0.9"/>
  <path d="M6.8 9.2 L15.6 9.2 L11.2 14.2 Z" fill="#4a3414"/>
</svg>
<div class="a" style="left:62px;top:2px;width:1px;height:23px;background:#b4b4b4;border-right:1px solid #f4f4f4;"></div>
<div id="ttext" class="a nw">Демонстрационная база / Управление торговлей, редакция 11&nbsp; (1С:Предприятие)</div>

<div id="fpanel" class="a"></div>
<svg class="a" style="left:19px;top:50px" width="22" height="22" viewBox="0 0 22 22"><g fill="#464646"><circle cx="3.3" cy="3.9" r="2.6"/><circle cx="10.7" cy="3.9" r="2.6"/><circle cx="18.1" cy="3.9" r="2.6"/><circle cx="3.3" cy="11.2" r="2.6"/><circle cx="10.7" cy="11.2" r="2.6"/><circle cx="18.1" cy="11.2" r="2.6"/><circle cx="3.3" cy="18.6" r="2.6"/><circle cx="10.7" cy="18.6" r="2.6"/><circle cx="18.1" cy="18.6" r="2.6"/></g></svg>
<div id="sidebar" class="a"></div>
<div id="gap" class="a"></div>
<div id="tabbar" class="a"></div>
<div id="tab" class="a"></div>
<div id="tabul" class="a"></div>
<div class="a nw" style="right:423.5px;top:53.5px;font-size:15.7px;color:#333;-webkit-text-stroke:0.15px #333;">Форма документа</div>
<svg class="a" style="left:832px;top:56px" width="11" height="11" viewBox="0 0 11 11"><path d="M1.5 1.5 L9.5 9.5 M9.5 1.5 L1.5 9.5" stroke="#3a3a3a" stroke-width="2.1"/></svg>
<div id="vline" class="a"></div>

<!-- sidebar items -->
<div class="a" style="left:28px;top:98px;width:12px;height:18px;background:repeating-linear-gradient(#3c3c3c 0,#3c3c3c 3px,transparent 3px,transparent 7px);"></div>
<svg class="a" style="left:26px;top:139px" width="14" height="20" viewBox="0 0 14 20"><path d="M3 2 L3 18 M0.5 5 L3 1.5 L5.5 5 M0.5 15 L3 18.5 L5.5 15 M3 17.5 L12 17.5 M6.5 6 L6.5 14" stroke="#3c3c3c" stroke-width="1.4" fill="none"/></svg>
<div class="a" style="left:28px;top:184px;width:17px;height:17px;border-radius:50%;background:#3c3c3c;"></div>
<div class="a" style="left:29px;top:230px;width:14px;height:13px;background:#3c3c3c;"></div>
<svg class="a" style="left:26px;top:268px" width="16" height="18" viewBox="0 0 16 18"><path d="M1 2 L4 2 L5 13 L14 13" stroke="#3c3c3c" stroke-width="2" fill="none"/><rect x="5" y="5" width="9" height="6" fill="#3c3c3c"/></svg>
<div class="a" style="left:28px;top:312px;width:15px;height:13px;background:repeating-linear-gradient(#3c3c3c 0,#3c3c3c 3px,transparent 3px,transparent 5px);"></div>
<div class="a" style="left:27px;top:326px;width:19px;height:2px;background:#3c3c3c;"></div>
<div class="a side nw" style="top:310.8px;">Склад и доставка</div>
<svg class="a" style="left:27px;top:353px" width="19" height="19" viewBox="0 0 19 19"><circle cx="9.3" cy="9.6" r="8.4" fill="#3b3936"/><path d="M7.8 5.3 L7.8 15.6 M5.3 12.4 L12.2 12.4 M7.8 5.9 L10.9 5.9 C12.6 5.9 13.4 6.8 13.4 8.2 C13.4 9.6 12.6 10.6 10.9 10.6 L5.6 10.6" stroke="#f2f0dc" stroke-width="1.4" fill="none"/></svg>
<div class="a side nw" style="top:353px;">Казначейство</div>
<svg class="a" style="left:27px;top:408px" width="19" height="16" viewBox="0 0 19 16"><g fill="#3b3936"><rect x="1" y="13" width="17" height="1.8"/><rect x="2.1" y="3.9" width="3.5" height="9.5"/><rect x="7.2" y="6.2" width="3.4" height="7"/><rect x="12.1" y="1.2" width="3.4" height="12"/></g></svg>
<div class="a side nw" style="top:396px;">Финансовый результат и<br>контроллинг</div>
<svg class="a" style="left:26.3px;top:467.2px" width="20" height="20" viewBox="-10 -10 20 20"><g fill="#3b3936"><circle r="6.6"/><circle cx="0" cy="-7.3" r="1.5"/><circle cx="0" cy="7.3" r="1.5"/><circle cx="-7.3" cy="0" r="1.5"/><circle cx="7.3" cy="0" r="1.5"/><circle cx="5.16" cy="-5.16" r="1.5"/><circle cx="-5.16" cy="5.16" r="1.5"/><circle cx="-5.16" cy="-5.16" r="1.5"/><circle cx="5.16" cy="5.16" r="1.5"/></g><circle r="3.4" fill="#f9ea98"/></svg>
<div class="a side nw" style="top:458px;">НСИ и<br>администрирование</div>

<!-- content -->
<div class="a" style="left:700px;top:156px;width:109px;height:31px;border:1px solid #bcbcbc;border-radius:3px;background:linear-gradient(#fff,#f1f1f1);box-sizing:border-box;box-shadow:0 1px 1px rgba(0,0,0,0.12);"></div>
<div class="a nw" style="left:783.5px;top:158px;font-size:24px;line-height:27.6px;color:#333;">Σ</div>
<div id="hline" class="a"></div>

<!-- document -->
<div class="a nw" style="right:386.5px;top:233.9px;font-size:20px;font-weight:bold;line-height:22px;color:#111;word-spacing:1px;">Универсальный передаточный документ № 2 от 29 ноября 2017 г.</div>
<div class="a doc" style="right:234px;top:309.3px;line-height:18px;">Продавец: Акционерное общество "Торговый дом Комплексный"</div>
<div class="a doc" style="right:339px;top:330px;line-height:18px;">Адрес: 127018, Москва г, Ленинградский пр-кт, дом № 56</div>
<div class="a doc" style="right:462px;top:350.5px;line-height:18px;">ИНН/КПП продавца: 7708004767 / 770801001</div>
<div class="a doc" style="right:390.5px;top:404.5px;line-height:18px;">Грузополучатель и его адрес: ИП "Саймон и Шустер"</div>
<div class="a doc" style="right:455.5px;top:431.5px;line-height:18px;">К платежно-расчетному документу № --</div>
<div class="a doc" style="left:465.5px;top:451px;line-height:20.5px;">Покупатель: ИП "Саймон и Шустер"<br>Адрес:<br>ИНН/КПП покупателя: 0777123412<br>Валюта: наименование, код Российский рубль, 643<br>Идентификатор государственного контракта, договора (соглашения) (при наличии):</div>

<!-- thick vertical -->
<div class="tb" style="left:439px;top:230px;width:2.6px;height:572px;"></div>
<div class="tb" style="left:439px;top:821px;width:2.6px;height:23px;"></div>
<!-- table horizontal lines -->
<div class="tb" style="left:290px;top:562px;width:960px;height:1.3px;"></div>
<div class="tb" style="left:806.5px;top:621px;width:126px;height:1.2px;"></div>
<div class="tb" style="left:290px;top:720px;width:960px;height:1.3px;"></div>
<div class="tb" style="left:290px;top:740px;width:960px;height:1.3px;"></div>
<div class="tb" style="left:290px;top:761px;width:960px;height:1.2px;"></div>
<!-- table vertical lines -->
<div class="tb" style="left:290px;top:562px;width:2px;height:240px;background:#333;"></div>
<div class="tb" style="left:332px;top:562px;width:2px;height:240px;background:#333;"></div>
<div class="tb" style="left:700px;top:562px;width:2px;height:240px;background:#333;"></div>
<div class="tb" style="left:806px;top:562px;width:2px;height:240px;background:#333;"></div>
<div class="tb" style="left:848px;top:621px;width:2px;height:181px;background:#333;"></div>
<div class="tb" style="left:931px;top:562px;width:2px;height:240px;background:#333;"></div>
<div class="tb" style="left:1007px;top:562px;width:2px;height:240px;background:#333;"></div>
<div class="tb" style="left:1101px;top:562px;width:2px;height:240px;background:#333;"></div>
<div class="tb" style="left:1240px;top:562px;width:1.3px;height:240px;"></div>
<!-- dashed page break -->
<svg class="a" style="left:280px;top:801px" width="966" height="3"><line x1="0" y1="1.3" x2="966" y2="1.3" stroke="#222" stroke-width="1.4" stroke-dasharray="7.3 2.5"/></svg>
<div class="a doc" style="left:295px;top:803.5px;line-height:18px;">Универсальный передаточный документ № 2 от 29 ноября 2017 г.</div>

<!-- header cells -->
<div class="th" style="left:289.5px;top:563px;width:42px;height:157px;display:flex;align-items:center;justify-content:center;">№<br>п/п</div>
<div class="th" style="left:330.5px;top:563px;width:105px;height:157px;display:flex;align-items:center;justify-content:center;">Код товара/<br>работ, услуг</div>
<div class="th" style="left:438.5px;top:563px;width:258px;height:157px;display:flex;align-items:center;justify-content:center;">Наименование товара (описание<br>выполненных работ, оказанных<br>&nbsp;услуг), имущественного права</div>
<div class="th" style="left:701.5px;top:563px;width:105px;height:157px;display:flex;align-items:center;justify-content:center;">Код вида<br>товара</div>
<div class="th" style="left:807.5px;top:563px;width:124px;height:58px;display:flex;align-items:center;justify-content:center;">Единица<br>измерения</div>
<div class="th" style="left:807.5px;top:622px;width:41px;height:98px;display:flex;align-items:center;justify-content:center;">код</div>
<div class="th" style="left:848.5px;top:622px;width:82px;height:98px;display:flex;align-items:center;justify-content:center;">условное<br>обозна-<br>чение<br>(нацио-<br>нальное)</div>
<div class="th" style="left:933px;top:563px;width:74px;height:157px;display:flex;align-items:center;justify-content:center;">Коли-<br>чество<br>(объем)</div>
<div class="th" style="left:1005.5px;top:563px;width:93px;height:157px;display:flex;align-items:center;justify-content:center;">Цена<br>(тариф)<br>за<br>единицу<br>измерения</div>
<div class="th" style="left:1102px;top:563px;width:125px;height:157px;display:flex;align-items:center;justify-content:center;">Стоимость<br>товаров (работ,<br>услуг),<br>имущест-<br>венных прав без<br>налога - всего</div>
<!-- column numbers -->
<div class="th" style="left:291px;top:721px;width:42px;height:19px;line-height:19px;">А</div>
<div class="th" style="left:334px;top:721px;width:105px;height:19px;line-height:19px;">Б</div>
<div class="th sm" style="left:442px;top:721px;width:258px;height:19px;line-height:19px;">1</div>
<div class="th sm" style="left:701.5px;top:721px;width:105px;height:19px;line-height:19px;">1а</div>
<div class="th sm" style="left:807.5px;top:721px;width:41px;height:19px;line-height:19px;">2</div>
<div class="th sm" style="left:850px;top:721px;width:82px;height:19px;line-height:19px;">2а</div>
<div class="th sm" style="left:933px;top:721px;width:74px;height:19px;line-height:19px;">3</div>
<div class="th sm" style="left:1008px;top:721px;width:93px;height:19px;line-height:19px;">4</div>
<div class="th sm" style="left:1102px;top:721px;width:128px;height:19px;line-height:19px;">5</div>
<!-- data rows -->
<div class="a doc" style="right:918px;top:742.5px;line-height:18px;">1</div>
<div class="a doc" style="left:338px;top:742.5px;line-height:18px;">М-77</div>
<div class="a doc" style="left:443.5px;top:742.5px;line-height:18px;">Комбайн MOULINEX&nbsp; A77 4C</div>
<div class="a doc" style="left:705.3px;top:742.5px;line-height:18px;">0101900000</div>
<div class="a doc" style="left:811.3px;top:742.5px;line-height:18px;">796</div>
<div class="a doc" style="left:854px;top:742.5px;line-height:18px;">шт</div>
<div class="a doc" style="right:243.3px;top:742.5px;line-height:18px;">4,000</div>
<div class="a doc" style="right:149.8px;top:742.5px;line-height:18px;">2 224,58</div>
<div class="a doc" style="right:11px;top:742.5px;line-height:18px;">8 898,31</div>
<div class="a doc" style="right:918px;top:764px;line-height:18px;">2</div>
<div class="a doc" style="left:338px;top:764px;line-height:18px;">КА-879</div>
<div class="a doc" style="left:443.5px;top:764px;line-height:18px;">Кофеварка JACOBS (Австрия)</div>
<div class="a doc" style="left:705.3px;top:764px;line-height:18px;">--</div>
<div class="a doc" style="left:811.3px;top:764px;line-height:18px;">796</div>
<div class="a doc" style="left:854px;top:764px;line-height:18px;">шт</div>
<div class="a doc" style="right:243.3px;top:764px;line-height:18px;">2,000</div>
<div class="a doc" style="right:149.8px;top:764px;line-height:18px;">7 521,19</div>
<div class="a doc" style="right:11px;top:764px;line-height:18px;">15 042,37</div>

<!-- main menu -->
<div class="menu" style="left:33px;top:25px;width:245px;height:298px;"></div>
<div class="a" style="left:34px;top:26px;width:245.5px;height:35.5px;background:#f7db1c;box-shadow:0 3px 5px rgba(0,0,0,0.13);"></div>
<svg class="a" style="left:30px;top:22px;z-index:2" width="255" height="45" viewBox="30 22 255 45">
  <defs><filter id="es" x="-10%" y="-30%" width="120%" height="160%"><feGaussianBlur stdDeviation="1.6"/></filter></defs>
  <rect x="37" y="31" width="240" height="29" rx="30" ry="15" fill="none" stroke="#b99a10" stroke-width="3" opacity="0.5" filter="url(#es)"/>
  <rect x="35.5" y="28.6" width="240.5" height="30.5" rx="31" ry="15.2" fill="none" stroke="#e25528" stroke-width="2.3"/>
</svg>
<div class="mi" style="left:88.5px;top:35.7px;color:#2d2a10;z-index:3"><u>Ф</u>айл</div>
<div class="arr" style="left:255.8px;top:39.4px;z-index:3"></div>
<div class="mi" style="left:88.5px;top:72.6px;"><u>П</u>равка</div>
<div class="arr" style="left:255.8px;top:76.3px;"></div>
<div class="mi" style="left:88.5px;top:109.1px;"><u>В</u>ид</div>
<div class="arr" style="left:255.8px;top:112.8px;"></div>
<div class="mi" style="left:88.5px;top:145.6px;">Таблица</div>
<div class="arr" style="left:255.8px;top:149.3px;"></div>
<div class="mi" style="left:88.5px;top:182.1px;"><u>С</u>ервис</div>
<div class="arr" style="left:255.8px;top:185.8px;"></div>
<div class="mi" style="left:88.5px;top:218.6px;"><u>О</u>кна</div>
<div class="arr" style="left:255.8px;top:222.3px;"></div>
<div class="mi" style="left:88.5px;top:255.1px;">Сп<u>р</u>авка</div>
<div class="arr" style="left:255.8px;top:258.8px;"></div>
<div class="sep" style="left:35px;top:284px;width:243px;"></div>
<div class="mi" style="left:88.5px;top:296.2px;">Все функции...</div>

<!-- submenu -->
<div class="menu" style="left:279px;top:27px;width:496px;height:422px;z-index:5"></div>
<div id="sub" class="a" style="left:0;top:0;width:1246px;height:844px;z-index:6">
<div class="a" style="left:281px;top:144px;width:493.5px;height:34.8px;background:#f7db1c;box-shadow:0 3px 5px rgba(0,0,0,0.13);"></div>
<svg class="a" style="left:276px;top:136px;" width="505" height="50" viewBox="276 136 505 50">
  <rect x="287" y="145" width="486" height="31" rx="30" ry="16" fill="none" stroke="#b99a10" stroke-width="3" opacity="0.5" filter="url(#es)"/>
  <rect x="285.5" y="142.5" width="488.5" height="35" rx="33" ry="17.5" fill="none" stroke="#e25528" stroke-width="2.3"/>
</svg>
<div class="mi" style="left:334px;top:37.8px;"><u>Н</u>овый...</div>
<div class="sc" style="right:508px;top:37.8px;">Ctrl+N</div>
<div class="mi" style="left:334px;top:74.3px;"><u>О</u>ткрыть...</div>
<div class="sc" style="right:508px;top:74.3px;">Ctrl+O</div>
<div class="sep" style="left:281px;top:104px;width:493px;"></div>
<div class="mi" style="left:334px;top:115.1px;"><u>С</u>охранить</div>
<div class="sc" style="right:508px;top:115.1px;">Ctrl+S</div>
<div class="mi" style="left:334px;top:151.8px;color:#2d2a10;">Сохранить <u>к</u>ак...</div>
<div class="mi" style="left:334px;top:188.8px;">Сравнить <u>ф</u>айлы...</div>
<div class="sep" style="left:281px;top:218.5px;width:493px;"></div>
<div class="mi" style="left:334px;top:230.9px;"><u>П</u>ечать...</div>
<div class="sc" style="right:508px;top:230.9px;">Ctrl+P</div>
<div class="mi" style="left:334px;top:267px;">Пе<u>ч</u>ать с текущими настройками</div>
<div class="sc" style="right:508px;top:267px;">Ctrl+Shift+P</div>
<div class="mi" style="left:334px;top:303.5px;">П<u>р</u>едварительный просмотр...</div>
<div class="mi" style="left:334px;top:339.9px;">Пара<u>м</u>етры страницы...</div>
<div class="sep" style="left:281px;top:369.5px;width:493px;"></div>
<div class="mi" style="left:334px;top:381.3px;color:#b4b4b4;">Список файлов</div>
<div class="sep" style="left:281px;top:410.5px;width:493px;"></div>
<div class="mi" style="left:334px;top:422.8px;">Вы<u>х</u>од</div>
<div class="sc" style="right:508px;top:422.8px;">Alt+F4</div>

<!-- icons -->
<svg class="a" style="left:294px;top:37px" width="17" height="19" viewBox="0 0 17 19">
  <path d="M1.5 1.5 L10.5 1.5 L15 6 L15 17.5 L1.5 17.5 Z" fill="#f1f1f1" stroke="#7a7a7a" stroke-width="1.3"/>
  <path d="M10.5 1.5 L10.5 6 L15 6" fill="#fff" stroke="#9a9a9a" stroke-width="1"/>
</svg>
<svg class="a" style="left:292px;top:72px" width="21" height="19" viewBox="0 0 21 19">
  <path d="M1.5 8 L2.5 5.5 Q8 2.5 13 5.5 L14 8 Z" fill="#f3d37a" stroke="#d7a743" stroke-width="1"/>
  <rect x="1.5" y="7.5" width="16" height="10" rx="1" fill="#f5d684" stroke="#d7a743" stroke-width="1.2"/>
  <path d="M15.5 1 L19.5 5.5 L17 5.5 L17 11 L14 11 L14 5.5 L11.5 5.5 Z" fill="#2f8bd0"/>
</svg>
<svg class="a" style="left:293px;top:115px" width="18" height="18" viewBox="0 0 18 18">
  <rect x="1" y="1" width="16" height="16" rx="1" fill="#6b9bd8" stroke="#3f67a3" stroke-width="1.2"/>
  <rect x="3.5" y="2" width="11" height="6" fill="#f4f4f4" stroke="#6b86b0" stroke-width="0.6"/>
  <rect x="4.5" y="11" width="9" height="6" fill="#cfd4d8"/>
  <rect x="5.5" y="12" width="2.5" height="4" fill="#555"/>
</svg>
<svg class="a" style="left:292px;top:187px" width="21" height="21" viewBox="0 0 21 21">
  <path d="M5 3 L9 3 L10 4.5 L17 4.5 L17 13 L5 13 Z" fill="#f5d684" stroke="#d7a743" stroke-width="1"/>
  <path d="M1 7.5 L5 7.5 L6 9 L13 9 L13 18 L1 18 Z" fill="#f5d684" stroke="#d7a743" stroke-width="1"/>
  <circle cx="13" cy="13" r="3.6" fill="#fff" stroke="#1f4f7c" stroke-width="2.2"/>
  <path d="M15.5 15.5 L19.5 19.5" stroke="#1f4f7c" stroke-width="2.6" stroke-linecap="round"/>
</svg>
<svg class="a" style="left:293px;top:229px" width="18" height="19" viewBox="0 0 18 19">
  <path d="M4.5 1 L10.5 1 L13.5 4 L13.5 7 L4.5 7 Z" fill="#fff" stroke="#8a8a8a" stroke-width="1"/>
  <rect x="1" y="6.5" width="16" height="7.5" rx="1.5" fill="#4b72ad" stroke="#36598f" stroke-width="1"/>
  <rect x="4.5" y="11" width="9" height="7" fill="#fff" stroke="#5f7aa3" stroke-width="1"/>
</svg>
<svg class="a" style="left:292px;top:265px" width="19" height="21" viewBox="0 0 19 21">
  <path d="M5.5 4 L11.5 4 L14.5 7 L14.5 10 L5.5 10 Z" fill="#fff" stroke="#8a8a8a" stroke-width="1"/>
  <rect x="2" y="9.5" width="16" height="7.5" rx="1.5" fill="#4b72ad" stroke="#36598f" stroke-width="1"/>
  <rect x="5.5" y="14" width="9" height="6.5" fill="#fff" stroke="#5f7aa3" stroke-width="1"/>
  <path d="M1 5 L4 8 L9.5 1.5" fill="none" stroke="#2fb52f" stroke-width="2.6"/>
</svg>
<svg class="a" style="left:294px;top:302px" width="18" height="19" viewBox="0 0 18 19">
  <path d="M1 1 L8.5 1 L12.5 5 L12.5 17 L1 17 Z" fill="#fafafa" stroke="#6f6f6f" stroke-width="1.2"/>
  <circle cx="10.3" cy="11.6" r="3.7" fill="#fff" stroke="#1f4f7c" stroke-width="2.3"/>
  <path d="M12.8 14.2 L16.5 17.8" stroke="#1f4f7c" stroke-width="2.6" stroke-linecap="round"/>
</svg>
<svg class="a" style="left:294px;top:338px" width="18" height="19" viewBox="0 0 18 19">
  <rect x="3" y="2.5" width="11" height="14" fill="none" stroke="#b9c7d4" stroke-width="0.8" stroke-dasharray="1.2 1.2"/>
  <path d="M8.5 2.5 L8.5 16.5 M1.5 9.5 L15.5 9.5" stroke="#3d6e9a" stroke-width="1.2"/>
  <path d="M8.5 0.5 L11 3.5 L6 3.5 Z M8.5 18.5 L11 15.5 L6 15.5 Z M0 9.5 L3 7 L3 12 Z M17 9.5 L14 7 L14 12 Z" fill="#1f4f7c"/>
</svg>
</div>


</div>
<svg id="edge" width="1246" height="844">
  <path d="M1227.4 0.0 L1226.9 2.5 L1227.0 4.4 L1225.1 5.7 L1229.9 7.8 L1229.4 9.4 L1228.9 11.8 L1230.5 13.1 L1228.3 14.5 L1228.8 17.4 L1229.7 19.8 L1228.8 21.2 L1230.2 23.7 L1230.3 26.1 L1230.7 28.9 L1229.8 31.2 L1228.6 33.9 L1228.9 35.3 L1230.2 36.8 L1228.8 39.6 L1228.9 41.4 L1227.8 43.8 L1227.4 46.8 L1227.9 48.2 L1227.9 51.4 L1226.8 53.3 L1227.3 54.9 L1225.3 56.3 L1224.4 59.3 L1227.0 61.6 L1225.3 64.5 L1227.5 66.4 L1225.4 67.9 L1226.5 69.6 L1225.1 71.3 L1227.1 73.2 L1227.2 75.8 L1226.0 78.4 L1228.9 81.1 L1228.7 83.1 L1226.7 84.4 L1223.7 86.0 L1227.1 87.5 L1229.7 88.7 L1227.8 90.2 L1227.6 92.1 L1229.0 95.3 L1228.0 96.7 L1230.5 98.4 L1231.0 99.7 L1229.9 101.2 L1230.6 104.3 L1228.9 106.1 L1229.4 108.8 L1228.3 110.7 L1230.2 113.8 L1229.7 116.7 L1224.6 118.9 L1228.0 120.7 L1228.5 123.8 L1230.0 126.9 L1227.6 128.6 L1228.8 130.2 L1228.2 133.1 L1226.8 135.9 L1228.9 138.9 L1226.9 141.1 L1228.7 142.9 L1227.3 144.9 L1226.4 147.6 L1228.6 149.1 L1228.3 150.6 L1226.5 153.1 L1225.4 154.5 L1226.8 157.0 L1227.8 159.1 L1225.7 160.7 L1226.6 162.4 L1225.0 164.4 L1225.9 166.3 L1225.5 169.4 L1225.7 171.6 L1225.3 172.8 L1226.4 174.0 L1226.0 176.2 L1225.2 178.0 L1223.7 180.8 L1224.1 182.5 L1224.8 184.7 L1224.2 187.7 L1224.3 189.9 L1224.2 192.0 L1224.5 195.1 L1222.9 198.2 L1224.7 201.3 L1221.4 202.7 L1224.3 204.1 L1222.9 207.1 L1223.1 209.6 L1223.6 212.7 L1224.6 214.7 L1223.7 217.6 L1224.5 219.8 L1226.3 221.6 L1223.7 223.7 L1229.4 226.2 L1225.3 229.0 L1226.7 230.2 L1225.6 231.7 L1225.3 234.5 L1226.5 237.6 L1225.0 238.9 L1225.2 241.0 L1230.6 243.5 L1228.0 244.8 L1227.2 246.7 L1225.9 248.4 L1226.0 250.1 L1226.4 251.4 L1228.3 253.2 L1226.6 255.4 L1228.8 256.6 L1226.9 258.9 L1226.6 262.0 L1227.8 264.1 L1227.7 266.1 L1227.0 269.2 L1227.9 271.8 L1225.9 273.7 L1228.0 275.1 L1225.9 276.6 L1227.6 279.5 L1226.3 281.2 L1226.7 282.7 L1228.3 285.9 L1228.2 287.6 L1225.0 289.5 L1226.5 291.6 L1224.8 293.8 L1222.1 295.2 L1225.3 297.0 L1226.9 299.3 L1227.2 301.9 L1227.4 303.8 L1228.9 306.4 L1226.0 309.4 L1224.3 312.2 L1226.4 314.4 L1225.5 317.3 L1225.7 319.8 L1223.9 321.1 L1226.0 322.5 L1225.2 325.0 L1223.1 327.1 L1224.6 329.8 L1223.4 332.4 L1223.6 334.1 L1224.3 336.7 L1225.6 339.9 L1226.4 342.0 L1223.7 344.5 L1227.0 346.2 L1223.0 348.5 L1227.3 351.1 L1226.9 352.8 L1225.9 355.0 L1228.8 356.6 L1227.2 357.8 L1227.5 360.9 L1229.3 362.6 L1226.9 364.9 L1227.2 368.0 L1229.9 370.2 L1230.1 371.9 L1227.3 373.2 L1228.5 375.3 L1228.7 377.1 L1230.2 378.4 L1230.9 379.8 L1229.2 382.8 L1231.7 384.8 L1230.0 386.7 L1229.1 388.0 L1232.0 389.8 L1230.6 391.5 L1231.9 393.4 L1230.8 396.3 L1230.4 399.4 L1231.0 400.7 L1230.6 403.4 L1231.4 404.7 L1229.5 406.8 L1231.4 409.5 L1229.2 412.0 L1228.7 414.0 L1231.0 415.6 L1230.9 417.2 L1228.4 419.3 L1226.9 420.7 L1229.6 422.4 L1229.0 425.1 L1228.8 427.4 L1228.5 428.7 L1229.2 430.2 L1228.1 433.1 L1228.7 434.8 L1230.0 437.9 L1227.3 439.1 L1228.6 442.1 L1228.3 443.3 L1229.7 446.2 L1227.3 447.9 L1229.0 450.1 L1228.8 452.8 L1230.7 454.9 L1229.6 456.5 L1227.0 458.3 L1225.3 460.8 L1228.3 463.1 L1226.7 464.7 L1229.3 466.8 L1227.7 469.8 L1229.2 471.5 L1226.1 473.3 L1227.3 475.9 L1228.8 478.4 L1226.9 479.7 L1226.5 482.2 L1227.6 484.9 L1227.1 488.0 L1226.9 489.7 L1229.3 491.5 L1227.0 493.1 L1229.4 495.6 L1227.1 497.6 L1225.8 499.1 L1229.5 502.1 L1229.7 505.3 L1229.8 506.8 L1229.0 508.1 L1228.0 510.0 L1227.9 511.3 L1227.5 514.4 L1228.3 516.0 L1228.4 518.8 L1230.3 520.8 L1229.6 522.7 L1226.2 525.5 L1230.5 526.8 L1230.5 529.5 L1230.8 531.3 L1230.1 533.0 L1227.9 534.8 L1230.0 537.8 L1228.8 539.0 L1231.2 542.2 L1229.6 543.9 L1228.9 546.9 L1231.0 549.6 L1229.5 552.0 L1228.7 553.9 L1225.7 556.6 L1229.8 558.9 L1231.8 561.9 L1228.9 563.3 L1229.8 565.9 L1230.3 567.9 L1230.8 570.6 L1230.7 572.1 L1229.0 574.4 L1228.5 576.0 L1230.5 577.5 L1228.8 579.4 L1228.1 581.6 L1230.2 584.1 L1229.7 586.9 L1225.4 588.2 L1228.6 591.3 L1229.4 593.3 L1229.0 595.0 L1228.3 596.4 L1227.4 598.1 L1227.0 599.7 L1225.3 602.2 L1226.4 604.7 L1228.3 606.3 L1225.9 607.7 L1224.8 610.0 L1226.6 612.5 L1228.2 614.4 L1226.2 616.7 L1228.0 619.6 L1227.2 621.2 L1227.8 622.4 L1226.3 625.3 L1226.0 627.4 L1229.0 629.9 L1226.8 631.8 L1226.9 633.6 L1226.8 635.0 L1226.0 638.1 L1228.6 641.2 L1228.5 642.5 L1227.6 645.5 L1228.2 647.1 L1228.4 649.1 L1226.5 650.6 L1227.1 652.9 L1228.2 654.6 L1227.7 655.8 L1229.4 657.1 L1228.0 659.4 L1228.0 661.5 L1227.6 664.0 L1228.2 665.2 L1228.7 666.9 L1226.9 669.0 L1226.8 670.4 L1227.8 671.8 L1230.4 673.1 L1228.2 675.8 L1229.6 677.8 L1229.9 680.7 L1227.4 683.5 L1229.9 685.7 L1229.4 687.3 L1228.1 688.6 L1229.9 690.1 L1227.5 692.9 L1227.8 696.0 L1225.7 698.2 L1230.3 699.7 L1228.0 702.7 L1229.2 704.1 L1230.3 706.1 L1234.4 708.4 L1229.0 710.9 L1231.0 712.6 L1230.4 714.5 L1232.9 716.1 L1230.1 717.8 L1230.3 720.2 L1228.3 721.4 L1229.7 723.8 L1228.8 726.8 L1227.4 729.3 L1229.7 730.7 L1230.6 733.1 L1230.3 735.5 L1229.7 738.6 L1231.0 740.0 L1230.4 742.7 L1231.2 744.0 L1231.3 745.9 L1231.7 748.9 L1229.6 752.0 L1232.5 754.0 L1231.4 755.2 L1230.3 756.7 L1231.8 758.9 L1230.8 760.4 L1232.6 761.7 L1229.7 764.4 L1231.1 767.1 L1228.2 769.2 L1230.6 770.4 L1232.2 773.0 L1231.2 774.8 L1231.0 777.5 L1232.4 780.0 L1229.3 783.0 L1231.6 784.7 L1230.2 787.3 L1229.8 789.2 L1231.2 791.7 L1230.4 794.8 L1231.6 797.4 L1230.6 800.1 L1233.8 801.7 L1231.9 803.2 L1224.9 805.1 L1229.8 807.7 L1227.6 810.3 L1229.7 812.3 L1226.9 815.2 L1227.0 818.3 L1226.2 819.7 L1227.8 822.5 L1227.0 820.1 L1224.3 822.5 L1222.2 822.2 L1220.5 824.0 L1218.6 824.8 L1215.7 823.6 L1213.7 824.7 L1211.0 824.3 L1208.1 823.5 L1206.6 823.5 L1203.9 826.1 L1201.7 826.0 L1199.5 825.2 L1197.8 826.9 L1196.1 826.5 L1194.7 828.2 L1192.1 827.2 L1190.2 826.5 L1187.2 826.1 L1186.0 826.6 L1183.0 827.6 L1180.0 827.4 L1177.7 828.5 L1175.3 827.4 L1173.7 828.4 L1171.1 826.7 L1168.3 827.5 L1166.2 828.1 L1164.6 826.6 L1161.7 826.1 L1160.0 826.4 L1158.5 826.3 L1155.3 827.1 L1152.2 825.4 L1149.1 826.9 L1147.0 825.3 L1145.6 825.2 L1144.3 825.6 L1141.7 825.7 L1139.6 824.7 L1137.6 826.0 L1135.5 825.5 L1133.5 824.5 L1130.5 825.6 L1127.6 825.2 L1125.5 824.2 L1124.1 824.4 L1121.5 824.7 L1119.4 824.2 L1117.4 824.6 L1115.9 824.4 L1113.9 823.9 L1112.6 823.9 L1109.8 824.7 L1108.4 823.7 L1105.8 823.4 L1102.9 823.2 L1099.8 822.3 L1097.9 823.1 L1094.7 819.9 L1092.7 819.9 L1090.6 821.0 L1088.9 820.0 L1085.8 821.4 L1083.0 821.6 L1081.6 822.9 L1079.1 822.6 L1077.5 824.2 L1075.0 824.4 L1072.8 823.6 L1071.4 825.2 L1068.5 824.4 L1066.8 825.2 L1065.6 826.1 L1063.9 825.5 L1061.8 826.7 L1059.9 827.8 L1058.6 827.8 L1055.8 826.5 L1053.4 829.2 L1050.8 827.4 L1049.4 827.5 L1047.5 827.6 L1044.7 828.0 L1042.3 829.8 L1039.3 830.2 L1037.7 830.2 L1035.0 829.9 L1032.7 829.8 L1031.2 830.3 L1029.7 830.7 L1027.4 833.9 L1025.3 831.5 L1022.4 831.4 L1019.3 830.9 L1016.8 830.7 L1014.3 832.7 L1011.1 831.4 L1008.1 830.1 L1005.7 830.7 L1003.7 830.9 L1001.0 830.1 L998.9 830.8 L997.2 831.3 L994.9 829.8 L991.8 830.5 L989.9 829.6 L987.6 830.2 L986.3 830.3 L984.0 828.6 L982.8 828.8 L980.4 829.8 L977.3 829.7 L974.9 829.9 L972.3 828.8 L970.2 830.1 L968.7 828.4 L965.6 829.9 L962.8 830.3 L961.1 829.1 L959.2 829.4 L956.2 828.6 L954.9 828.7 L952.5 830.7 L951.3 829.4 L948.2 830.9 L946.2 828.8 L944.6 825.9 L942.0 828.9 L940.6 830.7 L939.4 830.3 L936.7 830.7 L934.1 830.7 L932.7 830.2 L930.6 830.9 L927.5 827.5 L925.0 829.6 L922.3 829.2 L920.1 828.9 L917.8 829.6 L916.3 830.3 L913.8 829.5 L911.8 829.7 L909.1 828.8 L907.8 829.6 L904.9 827.7 L901.7 828.5 L899.9 827.3 L898.0 827.9 L895.0 828.2 L893.8 826.9 L891.4 828.3 L890.1 828.3 L887.2 827.7 L884.3 828.2 L881.3 827.5 L878.5 826.8 L875.4 826.9 L872.8 827.4 L871.1 828.1 L869.0 826.5 L866.3 826.9 L863.3 828.4 L861.1 827.7 L859.5 826.7 L857.6 827.7 L855.4 829.6 L853.4 826.6 L850.7 826.7 L848.8 824.8 L845.6 828.6 L843.3 827.3 L841.2 829.0 L838.4 829.2 L837.1 827.4 L835.7 827.1 L832.8 828.3 L829.8 827.5 L827.8 827.7 L826.0 828.9 L822.9 829.3 L820.8 828.1 L817.7 827.0 L815.8 830.2 L812.9 828.3 L810.3 829.8 L808.9 828.7 L805.9 830.1 L803.5 830.4 L801.6 829.3 L799.5 829.2 L798.0 831.7 L796.4 828.8 L794.8 830.9 L791.8 828.9 L790.4 830.7 L787.9 829.5 L785.1 829.5 L783.6 830.1 L781.3 828.6 L779.6 829.2 L777.8 830.1 L776.3 829.3 L773.3 828.3 L772.0 830.1 L770.3 829.1 L768.6 828.3 L765.4 830.2 L764.0 828.4 L762.7 829.4 L759.6 827.6 L757.7 829.6 L755.4 827.5 L752.4 827.2 L750.9 826.9 L748.3 824.1 L745.9 827.0 L744.3 827.1 L741.5 826.7 L740.1 826.8 L737.5 824.9 L735.6 826.5 L733.4 824.3 L731.3 826.1 L729.7 825.8 L728.2 824.8 L727.0 825.2 L724.7 824.4 L721.9 826.4 L719.3 825.4 L718.0 826.6 L715.8 825.9 L713.5 824.8 L711.8 825.3 L710.1 824.5 L707.6 826.2 L705.2 826.5 L703.8 827.5 L702.5 825.7 L700.3 826.3 L698.3 826.0 L695.4 826.2 L692.7 826.4 L689.6 827.1 L686.7 827.5 L683.6 828.3 L682.0 827.3 L678.8 828.6 L676.0 828.9 L672.8 829.2 L670.8 828.6 L668.5 827.3 L666.3 827.3 L663.2 829.3 L660.7 829.5 L657.8 827.5 L656.0 828.9 L653.7 829.2 L652.0 828.1 L648.9 827.3 L646.4 826.6 L643.3 827.3 L641.2 827.1 L639.7 826.0 L637.7 826.2 L636.4 826.7 L633.9 826.5 L632.3 826.7 L630.0 826.3 L628.2 825.2 L626.0 825.2 L624.8 825.0 L623.1 825.3 L621.3 826.1 L618.6 826.0 L616.5 823.3 L614.4 824.7 L612.8 825.0 L611.3 823.4 L608.7 823.7 L605.9 823.1 L603.2 823.4 L600.4 823.0 L599.0 824.9 L596.6 822.5 L594.2 822.4 L591.3 822.9 L589.2 822.7 L587.4 822.5 L585.4 822.4 L582.5 823.0 L581.0 822.5 L578.6 825.8 L576.8 824.0 L573.7 822.5 L570.6 822.6 L568.4 824.4 L566.2 824.7 L563.9 824.0 L562.0 823.9 L558.9 824.2 L557.5 823.6 L555.2 824.2 L552.1 824.2 L549.6 825.6 L547.4 825.3 L545.5 825.8 L543.3 823.9 L540.7 825.7 L537.7 825.0 L536.0 825.3 L534.4 824.6 L532.0 825.2 L529.5 824.6 L526.7 825.4 L525.5 825.5 L523.1 826.5 L521.0 826.4 L518.5 826.4 L516.1 826.2 L514.6 827.1 L513.2 825.7 L510.4 826.9 L509.0 825.5 L507.2 827.2 L505.6 828.6 L503.3 826.4 L501.3 825.8 L498.9 828.0 L496.5 829.0 L493.6 826.6 L490.8 826.7 L487.6 827.3 L486.0 827.1 L484.3 826.9 L482.1 828.1 L480.6 827.1 L477.5 827.1 L476.0 827.8 L474.0 826.8 L471.2 827.6 L469.6 827.5 L468.3 828.5 L466.8 827.3 L463.9 827.5 L461.1 829.2 L459.2 829.1 L456.0 828.1 L453.8 828.2 L452.4 829.4 L449.4 829.3 L447.7 829.5 L444.7 828.4 L442.4 828.9 L440.5 830.0 L438.6 827.3 L435.7 828.9 L434.3 829.5 L432.1 827.6 L430.5 828.2 L428.7 828.8 L426.0 829.8 L424.5 829.3 L422.0 828.3 L419.5 829.0 L416.6 828.0 L415.0 827.4 L412.3 825.9 L410.8 827.3 L408.8 826.9 L406.4 827.1 L404.0 828.2 L402.0 828.0 L400.8 828.3 L399.0 826.3 L396.6 826.2 L395.1 827.8 L392.1 828.7 L390.1 827.4 L388.4 825.6 L386.3 827.5 L383.6 827.1 L381.5 825.0 L379.5 826.1 L378.0 828.0 L375.2 825.9 L372.1 827.1 L370.4 825.9 L368.3 826.4 L366.9 827.8 L365.2 826.9 L363.1 828.7 L361.3 828.8 L359.0 827.7 L356.7 829.0 L354.2 828.8 L351.4 829.7 L349.6 828.7 L348.3 828.6 L345.7 829.3 L343.9 829.5 L342.3 831.7 L339.6 829.0 L336.5 829.9 L334.3 829.5 L332.0 828.3 L329.5 829.7 L327.0 828.6 L325.5 828.0 L322.7 828.4 L320.2 829.6 L318.6 829.3 L316.0 828.1 L313.1 827.9 L310.8 827.9 L309.1 827.0 L306.7 828.7 L303.7 828.8 L301.5 826.8 L299.1 826.5 L297.6 827.4 L296.2 826.4 L294.6 830.1 L291.7 828.2 L289.9 827.9 L287.9 827.1 L285.4 828.3 L283.8 827.0 L281.5 827.1 L280.1 827.1 L277.0 828.5 L273.8 828.6 L271.0 826.4 L268.6 827.0 L265.5 827.5 L263.7 827.1 L262.4 826.8 L260.3 826.5 L258.4 827.8 L256.1 827.9 L254.7 827.1 L252.4 827.1 L250.7 827.2 L249.0 828.3 L247.4 828.6 L245.1 828.3 L243.8 828.6 L241.5 829.4 L240.1 830.2 L238.6 829.1 L237.1 828.6 L234.4 825.1 L233.0 824.7 L231.8 824.9 L230.0 824.2 L227.0 822.4 L224.7 822.0 L223.2 821.7 L220.4 821.8 L219.0 821.1 L215.9 822.8 L214.5 821.9 L213.1 822.9 L211.4 821.3 L208.5 822.4 L207.3 821.4 L205.7 822.6 L203.1 822.6 L200.2 823.6 L197.3 824.2 L195.8 824.3 L193.0 823.8 L190.2 825.9 L188.0 825.1 L186.1 827.2 L184.7 826.1 L181.7 825.4 L179.8 827.4 L177.8 827.2 L176.0 825.5 L172.8 825.0 L170.2 825.0 L168.0 824.5 L165.8 825.8 L164.5 824.5 L161.6 824.5 L159.1 823.0 L156.3 823.7 L153.7 822.3 L151.1 823.3 L149.2 823.8 L147.8 823.5 L144.7 824.5 L143.0 824.3 L141.5 824.0 L139.4 825.5 L137.6 824.0 L135.8 826.9 L132.7 826.6 L130.3 826.4 L128.0 828.8 L125.2 827.5 L123.9 827.7 L122.1 825.2 L120.4 828.4 L118.4 827.3 L115.5 828.5 L112.8 829.3 L111.5 829.0 L109.6 827.5 L107.3 829.4 L104.3 827.9 L101.6 829.1 L99.0 827.9 L97.7 829.2 L95.5 829.2 L93.4 827.5 L91.1 830.1 L88.4 825.2 L86.9 829.9 L84.9 827.1 L82.6 826.9 L80.7 826.7 L78.1 825.8 L76.3 825.0 L74.2 822.8 L71.1 821.0 L68.6 822.7 L65.4 822.5 L64.0 822.5 L62.7 824.1 L61.1 825.7 L59.6 824.2 L56.6 825.7 L54.9 825.9 L52.4 824.2 L50.3 824.1 L48.9 825.9 L46.9 825.6 L44.9 825.2 L42.4 823.5 L40.7 823.9 L39.1 824.6 L37.3 825.1 L34.9 822.9 L32.0 823.0 L29.2 823.0 L27.0 824.7 L24.4 824.2 L22.1 825.1 L19.1 824.1 L16.2 823.9 L13.0 822.1 L9.8 824.0 L8.3 823.9 L5.8 824.5 L2.7 826.3 L0.0 826.0" fill="none" stroke="#222" stroke-width="1.5"/>
</svg>
</body></html>
